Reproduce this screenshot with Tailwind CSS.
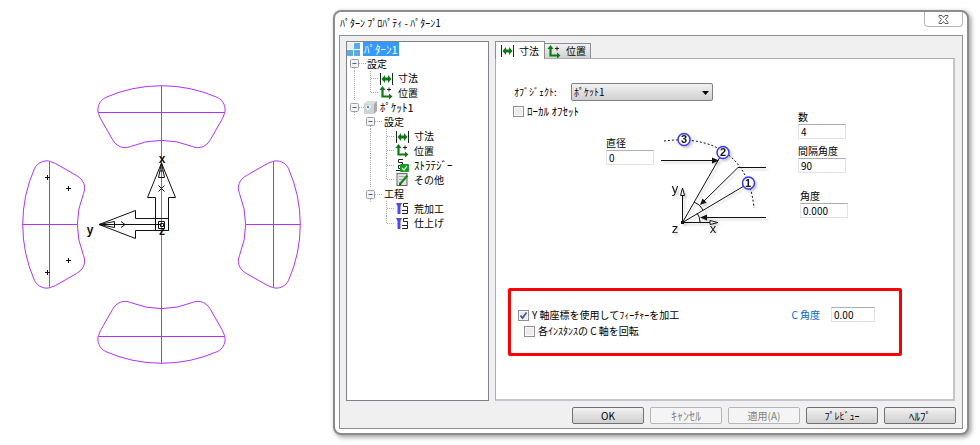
<!DOCTYPE html>
<html lang="ja">
<head>
    <meta charset="UTF-8">
    <meta name="viewport" content="width=device-width, initial-scale=1.0">
    <title>ﾊﾟﾀｰﾝ ﾌﾟﾛﾊﾟﾃｨ</title>
    <script src="https://cdn.jsdelivr.net/npm/@tailwindcss/browser@4"></script>
</head>
<body class="bg-white text-black font-['Noto_Sans_CJK_JP','Liberation_Sans',sans-serif] text-[10px] leading-[14px]">

    <!-- Shared icons -->
    <svg class="hidden">
        <symbol id="line" viewBox="0 0 16 15"><path d="M7.5 0V15" stroke="#aaa" stroke-dasharray="1 1"/></symbol>
        <symbol id="tee" viewBox="0 0 16 15"><path d="M7.5 0V15M8 7.5H16" stroke="#aaa" stroke-dasharray="1 1"/></symbol>
        <symbol id="elbow" viewBox="0 0 16 15"><path d="M7.5 0V8M8 7.5H16" stroke="#aaa" stroke-dasharray="1 1"/></symbol>
        <symbol id="minus" viewBox="0 0 20 15">
            <path d="M12 7.5H20M7.5 12V15" stroke="#aaa" stroke-dasharray="1 1"/>
            <rect x="3.5" y="3.5" width="8" height="8" rx="1" fill="#f4f4f4" stroke="#a0a0a0"/>
            <path d="M5.5 7.5H9.5" stroke="#3f5fb0"/>
        </symbol>
        <symbol id="size" viewBox="0 0 15 15">
            <path d="M1.500 2V14M13.500 2V14" stroke="#222"/>
            <path d="M2.500 8L6 4V6.500H9V4L12.500 8L9 12V9.500H6V12Z" fill="#0b7a14"/>
        </symbol>
        <symbol id="place" viewBox="0 0 15 15">
            <path d="M3.500 3V11.500H11" fill="none" stroke="#0b7a14" stroke-width="2.200"/>
            <path d="M0.500 5L3.500 1L6.500 5ZM10 8.500L13.500 11.500L10 14.500Z" fill="#0b7a14"/>
            <path d="M8 4.500H12M10 2.500V6.500" stroke="#222"/>
        </symbol>
        <symbol id="pocket" viewBox="0 0 15 15">
            <path d="M1 4L4 1H14V11L11 14H1Z" fill="#aaa"/>
            <path d="M1 4L4 1H14L11 4Z" fill="#ddd"/>
            <rect x="1" y="4" width="10" height="10" fill="#d0d3d6"/>
            <path d="M3 5.500H9L4 11Z" fill="#e8f4fc"/><path d="M4 6H6V8H4Z" fill="#4a9bdc"/>
        </symbol>
        <symbol id="strategy" viewBox="0 0 15 15">
            <path d="M8 1.500H3.500V4.500H7.500V7.500H3.500V10.500H6M1 12.500H5" fill="none" stroke="#222"/>
            <rect x="5" y="6" width="9" height="8" rx="1" fill="#14a01c"/>
            <path d="M7 10L9 12L12 8" fill="none" stroke="#fff" stroke-width="1.200"/>
        </symbol>
        <symbol id="note" viewBox="0 0 15 15">
            <rect x="2" y="1.500" width="10" height="12" fill="#e2e2e2" stroke="#666"/>
            <path d="M4 4.500H10M4 7.500H9M4 10.500H7" stroke="#aaa"/>
            <path d="M5 12L12.500 3.500" stroke="#128a1a" stroke-width="2.200"/><path d="M4 13.500L4.500 11L6.500 12.500Z" fill="#222"/>
        </symbol>
        <symbol id="mill" viewBox="0 0 15 15">
            <path d="M1 2H7L5.500 5V13H2.500V5Z" fill="#4a4af0"/>
            <path d="M13 2.500H8.500V5.500H12.500V8.500H12.500V12.500H7M7 9.500H12" fill="none" stroke="#222"/>
        </symbol>
    </svg>

    <main class="flex min-h-screen">
        <!-- Part drawing -->
        <svg class="h-[445px] w-[333px] shrink-0" viewBox="0 0 333 445" fill="none" role="img" aria-label="x y z">
            <defs>
                <g id="slot" stroke="#b030ff">
                    <path d="M-56 -127A139 139 0 0 1 56 -127C62 -124 65 -117 63 -111L61 -106L49 -85C45 -78 38 -75 31 -78A84 84 0 0 0 -31 -78C-38 -75 -45 -78 -49 -85L-61 -106L-63 -111C-65 -117 -62 -124 -56 -127Z"/>
                    <path d="M0 -139V-84M-63 -112H63"/>
                </g>
            </defs>
            <use href="#slot" transform="translate(161.500 224.500)"/>
            <use href="#slot" transform="translate(161.500 224.500) rotate(90)"/>
            <use href="#slot" transform="translate(161.500 224.500) rotate(180)"/>
            <use href="#slot" transform="translate(161.500 224.500) rotate(270)"/>
            <path d="M161.500 131V318" stroke="#777"/>
            <g stroke="#111">
                <path d="M161.500 163L147.500 197.500H155.500V230.500H168.500V197.500H175.500Z"/>
                <path d="M99 224.500L135.500 210.500V218.500H168.500V230.500H135.500V238.500Z"/>
                <path d="M161.500 163L158.500 177.500H164.500ZM160 171H163M99 224.500L114.500 221.500V227.500ZM106 224V225M99 224.500H161"/>
                <path d="M158.500 185.500L164.500 191.500M164.500 185.500L158.500 191.500M121 221.500L125 224.500L121 227.500"/>
                <path d="M158.500 221.500H164.500V228.500H158.500ZM160.500 223.500H163.500V226.500H160.500Z"/>
                <path d="M45 177.500H50M47.500 175V180M66 188.500H71M68.500 186V191M66 260.500H71M68.500 258V263M45 272.500H50M47.500 270V275"/>
            </g>
            <g fill="#111" font-family="Liberation Sans" font-size="12" font-weight="bold" text-anchor="middle">
                <text x="162" y="163">x</text><text x="90" y="234">y</text><text x="162" y="235">z</text>
            </g>
        </svg>

        <!-- Dialog -->
        <section class="mt-[10px] mr-[11px] mb-[10px] flex flex-1 flex-col rounded-lg border-2 border-[#8c8c8c] bg-white px-1 pb-1 shadow-[2px_2px_5px_rgba(0,0,0,0.4)]">
            <header class="flex h-[23px] items-start justify-between">
                <h1 class="pt-[4px] pl-px">ﾊﾟﾀｰﾝ ﾌﾟﾛﾊﾟﾃｨ - ﾊﾟﾀｰﾝ1</h1>
                <button class="flex h-[15px] w-[39px] items-center justify-center rounded-b border border-t-0 border-[#b4b6ba]" aria-label="閉じる">
                    <svg class="h-[9px] w-[11px]" viewBox="0 0 11 9"><path d="M1 .5H4L5.500 2.500L7 .5H10V1.500L7.500 4.500L10 7.500V8.500H7L5.500 6.500L4 8.500H1V7.500L3.500 4.500L1 1.500Z" fill="#fff" stroke="#555b66"/></svg>
                </button>
            </header>

            <div class="flex flex-1 flex-col border border-[#909090] bg-[#f0f0f0] px-[6px] pt-[5px] pb-1">
                <div class="flex flex-1 gap-[6px]">
                    <!-- Tree -->
                    <ul class="w-[143px] shrink-0 border border-[#7f8288] bg-white *:flex *:h-[14px] *:items-center *:even:h-[15px]">
                        <li>
                            <svg class="h-[14px] w-[14px] shrink-0" viewBox="0 0 14 14"><path d="M0 1H6V7H0Z" fill="#e6eef4"/><path d="M7 1H13V7H7ZM0 8H6V14H0ZM7 8H13V14H7Z" fill="#5aaae6"/></svg>
                            <span class="ml-[2px] bg-[#3399ff] px-px text-[11px] leading-[14px] text-white">ﾊﾟﾀｰﾝ1</span>
                        </li>
                        <li><svg class="h-[15px] w-5"><use href="#minus"/></svg>設定</li>
                        <li><svg class="h-[15px] w-4"><use href="#line"/></svg><svg class="h-[15px] w-4"><use href="#tee"/></svg><svg class="mr-1 h-[15px] w-[15px]"><use href="#size"/></svg>寸法</li>
                        <li><svg class="h-[15px] w-4"><use href="#line"/></svg><svg class="h-[15px] w-4"><use href="#elbow"/></svg><svg class="mr-1 h-[15px] w-[15px]"><use href="#place"/></svg>位置</li>
                        <li><svg class="-mr-1 h-[15px] w-5"><use href="#minus"/></svg><svg class="mr-[2px] h-[15px] w-[15px]"><use href="#pocket"/></svg><span class="text-[11px] leading-[14px]">ﾎﾟｹｯﾄ1</span></li>
                        <li class="pl-4"><svg class="mr-px h-[15px] w-5"><use href="#minus"/></svg>設定</li>
                        <li class="pl-4"><svg class="h-[15px] w-4"><use href="#line"/></svg><svg class="h-[15px] w-4"><use href="#tee"/></svg><svg class="mr-1 h-[15px] w-[15px]"><use href="#size"/></svg>寸法</li>
                        <li class="pl-4"><svg class="h-[15px] w-4"><use href="#line"/></svg><svg class="h-[15px] w-4"><use href="#tee"/></svg><svg class="mr-1 h-[15px] w-[15px]"><use href="#place"/></svg>位置</li>
                        <li class="pl-4"><svg class="h-[15px] w-4"><use href="#line"/></svg><svg class="h-[15px] w-4"><use href="#tee"/></svg><svg class="mr-1 h-[15px] w-[15px]"><use href="#strategy"/></svg><span class="text-[11px] leading-[14px]">ｽﾄﾗﾃｼﾞｰ</span></li>
                        <li class="pl-4"><svg class="h-[15px] w-4"><use href="#line"/></svg><svg class="h-[15px] w-4"><use href="#elbow"/></svg><svg class="mr-1 h-[15px] w-[15px]"><use href="#note"/></svg>その他</li>
                        <li class="pl-4"><svg class="mr-px h-[15px] w-5"><use href="#minus"/></svg>工程</li>
                        <li class="pl-8"><svg class="h-[15px] w-4"><use href="#tee"/></svg><svg class="mr-1 h-[15px] w-[15px]"><use href="#mill"/></svg>荒加工</li>
                        <li class="pl-8"><svg class="h-[15px] w-4"><use href="#elbow"/></svg><svg class="mr-1 h-[15px] w-[15px]"><use href="#mill"/></svg>仕上げ</li>
                    </ul>

                    <!-- Tabs -->
                    <div class="mr-[1px] flex flex-1 flex-col">
                        <div class="flex h-[17px] items-end" role="tablist">
                            <button class="z-10 -mb-px flex h-[18px] w-[50px] items-center gap-1 border border-b-0 border-[#8c8e94] bg-white pl-[4px]" role="tab" aria-selected="true"><svg class="h-[15px] w-[15px]"><use href="#size"/></svg>寸法</button>
                            <button class="flex h-[15px] w-[46px] items-center gap-1 border border-b-0 border-l-0 border-[#8c8e94] bg-linear-to-b from-[#f2f2f2] to-[#d2d2d2] pl-[2px]" role="tab" aria-selected="false"><svg class="h-[15px] w-[15px]"><use href="#place"/></svg>位置</button>
                        </div>

                        <form id="pattern" class="flex-1 border border-r-2 border-b-2 border-[#a9abb5] border-r-[#c4c4cc] border-b-[#c4c4cc] bg-white pl-3">
                            <div class="flex gap-[28px]">
                                <div class="pt-6 pl-[5px]">
                                    <div class="flex items-center">
                                        <label for="object" class="w-[58px] pl-px whitespace-nowrap">ｵﾌﾞｼﾞｪｸﾄ:</label>
                                        <div class="relative">
                                            <select id="object" class="h-[18px] w-[142px] appearance-none rounded-xs border border-[#808080] bg-linear-to-b from-[#f2f2f2] to-[#d0d0d0] pl-[2px] leading-[14px]">
                                                <option>ﾎﾟｹｯﾄ1</option>
                                            </select>
                                            <svg class="pointer-events-none absolute top-2 right-1 h-[4px] w-[7px]" viewBox="0 0 7 4"><path d="M0 0H7L3.500 4Z"/></svg>
                                        </div>
                                    </div>
                                    <label class="mt-[3px] flex items-center gap-[3px] text-[11px] leading-[14px]">
                                        <input type="checkbox" class="h-[11px] w-[11px] appearance-none border border-[#8e8f8f] bg-[#ececec] shadow-[inset_0_0_0_1px_#f8f8f8]">ﾛｰｶﾙ ｵﾌｾｯﾄ
                                    </label>
                                    <div class="mt-[10px] flex gap-[6px] pl-[93px]">
                                        <div class="flex flex-col pt-2">
                                            <label for="diameter">直径</label>
                                            <input id="diameter" value="0" class="h-[15px] w-12 border border-[#e0e3ea] border-t-[#abadb3] pl-[2px]">
                                        </div>
                                        <svg class="h-[112px] w-[110px]" viewBox="660 128 110 112" fill="none" stroke="#111">
                                            <g class="drop-shadow-[2px_2px_1px_rgba(0,0,0,0.2)]">
                                                <path d="M664 141C700 136 748 146 754 208" stroke-dasharray="2 2"/>
                                                <path d="M720 157L682.500 222.500L744 186M661 160.500H713M766 167.500H738L704 201M766 217.500H706"/>
                                                <path d="M694 202Q700 204 703 210M697 213Q700 217 700 222M682.500 222.500V196M682.500 222.500H710"/>
                                                <path d="M682.500 188L680.500 195.500H684.500ZM718 222.500L710 220.500V224.500Z" fill="#fff"/>
                                                <path d="M719 160.500L712 157.500V163.500ZM700 205L702.500 198.500L706.500 202.500ZM700 217.500L707 214.500V220.500ZM681 221H684V224H681Z" fill="#111" stroke="none"/>
                                                <g fill="#fff" stroke="#3636ff" stroke-width="1.500">
                                                    <circle cx="684" cy="139.500" r="6"/><circle cx="723" cy="152.500" r="6"/><circle cx="748.500" cy="183" r="6"/>
                                                </g>
                                                <g fill="#111" stroke="none" font-family="Liberation Sans" font-size="11" font-weight="bold" text-anchor="middle">
                                                    <text x="684" y="143">3</text><text x="723" y="156">2</text><text x="748" y="187">1</text>
                                                </g>
                                                <g fill="#111" stroke="none" font-family="Liberation Sans" font-size="13" text-anchor="middle">
                                                    <text x="675" y="193">y</text><text x="713" y="233">x</text><text x="675" y="233">z</text>
                                                </g>
                                            </g>
                                        </svg>
                                    </div>
                                </div>
                                <div class="flex flex-col pt-[51px]">
                                    <label for="count">数</label>
                                    <input id="count" value="4" class="h-[15px] w-12 border border-[#e0e3ea] border-t-[#abadb3] pl-[2px]">
                                    <label for="spacing" class="mt-[5px]">間隔角度</label>
                                    <input id="spacing" value="90" class="h-[15px] w-12 border border-[#e0e3ea] border-t-[#abadb3] pl-[2px]">
                                    <label for="angle" class="mt-4 pl-[2px]">角度</label>
                                    <input id="angle" value="0.000" class="ml-[2px] h-[15px] w-12 border border-[#e0e3ea] border-t-[#abadb3] pl-[2px]">
                                </div>
                            </div>

                            <!-- Highlighted options -->
                            <div class="mt-[48px] mr-[51px] flex h-[68px] justify-between rounded-xs border-3 border-[#ff0000] pt-4 pr-6 pl-[7px]">
                                <div>
                                    <label class="flex h-4 items-center gap-[3px]">
                                        <span class="relative flex">
                                            <input type="checkbox" checked class="h-[11px] w-[11px] appearance-none border border-[#8e8f8f] bg-[#ececec] shadow-[inset_0_0_0_1px_#f8f8f8]">
                                            <svg class="pointer-events-none absolute inset-0 h-[11px] w-[11px]" viewBox="0 0 11 11"><path d="M2.500 5.500L4.500 8L8.500 2.500" fill="none" stroke="#3c56a8" stroke-width="1.700"/></svg>
                                        </span>Y 軸座標を使用してﾌｨｰﾁｬｰを加工
                                    </label>
                                    <label class="flex h-4 items-center gap-[3px] pl-[6px]">
                                        <input type="checkbox" class="h-[11px] w-[11px] appearance-none border border-[#8e8f8f] bg-[#ececec] shadow-[inset_0_0_0_1px_#f8f8f8]">各ｲﾝｽﾀﾝｽの C 軸を回転
                                    </label>
                                </div>
                                <div class="flex h-[15px] items-center gap-[11px]">
                                    <label for="c-angle" class="text-[#0066cc]">C 角度</label>
                                    <input id="c-angle" value="0.00" class="h-[15px] w-[44px] border border-[#e0e3ea] border-t-[#abadb3] pl-[2px]">
                                </div>
                            </div>
                        </form>
                    </div>
                </div>

                <!-- Buttons -->
                <footer class="mt-[6px] flex justify-end gap-[6px] *:h-[17px] *:w-[72px] *:rounded-xs *:border *:leading-[14px]">
                    <button class="border-[#707070] bg-linear-to-b from-[#f2f2f2] to-[#cfcfcf]">OK</button>
                    <button disabled class="border-[#b5b8ba] bg-[#f4f4f4] text-[12px] text-[#838383]">ｷｬﾝｾﾙ</button>
                    <button disabled class="border-[#b5b8ba] bg-[#f4f4f4] text-[#838383]">適用(A)</button>
                    <button class="border-[#707070] bg-linear-to-b from-[#f2f2f2] to-[#cfcfcf]">ﾌﾟﾚﾋﾞｭｰ</button>
                    <button class="border-[#707070] bg-linear-to-b from-[#f2f2f2] to-[#cfcfcf] text-[11px]">ﾍﾙﾌﾟ</button>
                </footer>
            </div>
        </section>
    </main>
</body>
</html>
